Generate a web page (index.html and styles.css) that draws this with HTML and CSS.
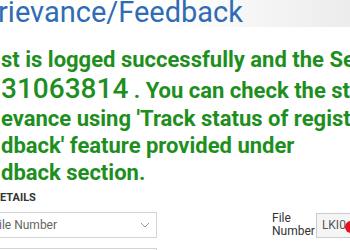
FILE: index.html
```html
<!DOCTYPE html>
<html>
<head>
<meta charset="utf-8">
<link rel="stylesheet" href="styles.css">
</head>
<body>
<div class="page">
  <div class="header"><h1 class="title">rievance/Feedback</h1></div>
  <p class="msg">st is logged successfully and the Se<br><span class="num">31063814</span> . You can check the st<br>evance using 'Track status of registe<br>dback' feature provided under<br>dback section.</p>
  <div class="section-title">ETAILS</div>
  <div class="form-row">
    <div class="select"><span class="select-text">ile Number</span><svg class="chev" width="10" height="6" viewBox="0 0 10 6"><path d="M1 1 L5 5 L9 1" fill="none" stroke="#999" stroke-width="1"/></svg></div>
    <label class="lbl">File<br>Number</label>
    <div class="input"><span>LKI0</span><span class="err"></span></div>
  </div>
  <div class="select second"></div>
</div>
</body>
</html>
```
FILE: styles.css
```css
html, body { margin: 0; padding: 0; background: #fff; }
body { width: 350px; height: 250px; overflow: hidden; font-family: Roboto, "Liberation Sans", sans-serif; }
.page { width: 350px; }
.header { height: 30px; background: linear-gradient(to right, #ffffff 45%, #ececec 100%); }
.title { margin: -3px 0 0 -2px; font-size: 29px; line-height: 30px; font-weight: 400; color: #2f6cb3; white-space: nowrap; }
.msg { margin: 19px 0 0 1px; font-size: 22px; line-height: 27px; font-weight: 700; color: #1e8f1e; white-space: nowrap; }
.num { font-size: 28px; line-height: 32px; font-weight: 500; }
.section-title { margin-top: 5px; font-size: 11px; font-weight: 700; color: #333; line-height: 14px; }
.form-row { display: flex; align-items: center; margin-top: 7px; }
.select { box-sizing: border-box; width: 157px; height: 26px; border: 1px solid #d4d4d4; border-left: none; display: flex; align-items: center; justify-content: space-between; padding: 0 6px 0 0; flex: none; }
.select-text { font-size: 12px; color: #666; margin-left: -1px; }
.chev { display: block; }
.lbl { margin-left: 115px; font-size: 12px; line-height: 13px; color: #333; flex: none; }
.input { box-sizing: border-box; margin-left: 1px; flex: none; width: 60px; height: 25px; border: 1px solid #ccc; background: #f5f5f5; display: flex; align-items: center; padding-left: 5px; font-size: 12px; color: #555; position: relative; }
.err { position: absolute; left: 28px; top: 7px; width: 12px; height: 12px; border-radius: 50%; background: #e8101a; }
.second { margin-top: 10px; height: 10px; border-bottom: none; }
```
